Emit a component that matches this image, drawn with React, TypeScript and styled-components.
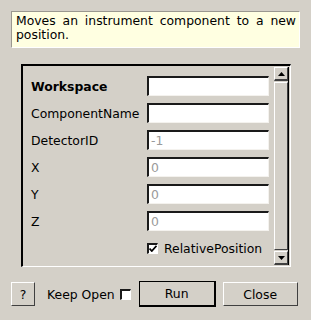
import { Fragment } from 'react'
import styled, { createGlobalStyle } from 'styled-components'

const GlobalStyle = createGlobalStyle`
  html, body {
    margin: 0;
    padding: 0;
    background: #d4d0c8;
  }
  body {
    font-family: "DejaVu Sans", "Liberation Sans", sans-serif;
    font-size: 12.4px;
    color: #000;
  }
`

const Dialog = styled.div`
  width: 311px;
  height: 320px;
  box-sizing: border-box;
  padding: 11px 11px 0 11px;
  display: flex;
  flex-direction: column;
`

const Description = styled.p`
  margin: 0;
  height: 37px;
  box-sizing: border-box;
  padding: 2px 3px 0 4px;
  background: #ffffe1;
  border-top: 1px solid #9a9890;
  border-left: 1px solid #9a9890;
  border-right: 1px solid #ffffff;
  border-bottom: 1px solid #ffffff;
  line-height: 14px;
  text-align: justify;
  width: 289px;
`

const Panel = styled.div`
  margin: 16px 0 0 10px;
  width: 270px;
  height: 203px;
  box-sizing: border-box;
  border-top: 2px solid #000;
  border-left: 2px solid #000;
  border-right: 1px solid #fff;
  border-bottom: 1px solid #fff;
  display: grid;
  grid-template-columns: 1fr 16px;
  column-gap: 4px;
`

const Form = styled.div`
  padding: 10px 0 0 8px;
  display: grid;
  grid-template-columns: 116px 122px;
  grid-auto-rows: 20px;
  row-gap: 7px;
  align-items: center;
`

const Label = styled.span<{ $bold?: boolean }>`
  font-weight: ${p => (p.$bold ? 'bold' : 'normal')};
`

const Input = styled.div`
  height: 20px;
  box-sizing: border-box;
  background: #fff;
  border-top: 2px solid #1a1a1a;
  border-left: 2px solid #1a1a1a;
  border-right: 1px solid #f4f2ee;
  border-bottom: 1px solid #f4f2ee;
  padding-left: 2px;
  color: #9a9a9a;
  line-height: 17px;
`

const CheckRow = styled.label`
  grid-column: 2;
  display: flex;
  align-items: center;
  gap: 6px;
`

const Box = styled.span`
  width: 11px;
  height: 11px;
  box-sizing: border-box;
  background: #fff;
  border-top: 2px solid #1a1a1a;
  border-left: 2px solid #1a1a1a;
  border-right: 1px solid #fff;
  border-bottom: 1px solid #fff;
  display: inline-flex;
  align-items: center;
  justify-content: center;
  flex: none;
`

const Scrollbar = styled.div`
  margin: 1px 1px 1px 0;
  display: flex;
  flex-direction: column;
  border-right: 1px solid #000;
`

const ArrowButton = styled.div`
  height: 14px;
  box-sizing: border-box;
  border-top: 1px solid #fff;
  border-left: 1px solid #fff;
  border-right: 1px solid #404040;
  border-bottom: 2px solid #404040;
  display: flex;
  align-items: center;
  justify-content: center;
`

const Thumb = styled.div`
  flex: 1;
  margin: 1px 0;
  border-top: 1px solid #fff;
  border-left: 1px solid #fff;
  border-right: 1px solid #404040;
  border-bottom: 1px solid #404040;
`

const Footer = styled.div`
  margin-top: 14px;
  display: flex;
  align-items: center;
  height: 26px;
`

const Button = styled.div<{ $w: number; $default?: boolean; $gap?: number }>`
  width: ${p => p.$w}px;
  height: ${p => (p.$default ? 26 : 24)}px;
  margin-left: ${p => p.$gap ?? 0}px;
  box-sizing: border-box;
  display: flex;
  align-items: center;
  justify-content: center;
  border-top: 1px solid #fff;
  border-left: 1px solid #fff;
  border-right: 1px solid #404040;
  border-bottom: 1px solid #404040;
  ${p => p.$default ? 'outline: 1px solid #000; outline-offset: -1px; border-right-width: 2px; border-bottom-width: 2px; border-right-color: #000; border-bottom-color: #000;' : ''}
`

const KeepOpen = styled.label`
  display: flex;
  align-items: center;
  gap: 5px;
  margin: 0 8px 0 12px;
`

const Tick = () => (
  <svg width="8" height="7" viewBox="0 0 8 7">
    <path d="M0.5 3.5 L2.8 6 L7.5 0.8" stroke="#000" strokeWidth="1.8" fill="none" />
  </svg>
)

const Arrow = ({ up }: { up?: boolean }) => (
  <svg width="7" height="4" viewBox="0 0 7 4">
    <path d={up ? 'M0 4 L3.5 0 L7 4 Z' : 'M0 0 L3.5 4 L7 0 Z'} fill="#000" />
  </svg>
)

const fields: { name: string; value: string; bold?: boolean }[] = [
  { name: 'Workspace', value: '', bold: true },
  { name: 'ComponentName', value: '' },
  { name: 'DetectorID', value: '-1' },
  { name: 'X', value: '0' },
  { name: 'Y', value: '0' },
  { name: 'Z', value: '0' }
]

const App = (): JSX.Element => (
  <Dialog>
    <GlobalStyle />
    <Description>Moves an instrument component to a new position.</Description>
    <Panel>
      <Form>
        {fields.map(f => (
          <Fragment key={f.name}>
            <Label $bold={f.bold}>{f.name}</Label>
            <Input>{f.value}</Input>
          </Fragment>
        ))}
        <CheckRow>
          <Box><Tick /></Box>
          RelativePosition
        </CheckRow>
      </Form>
      <Scrollbar>
        <ArrowButton><Arrow up /></ArrowButton>
        <Thumb />
        <ArrowButton><Arrow /></ArrowButton>
      </Scrollbar>
    </Panel>
    <Footer>
      <Button $w={24}>?</Button>
      <KeepOpen>Keep Open <Box /></KeepOpen>
      <Button $w={77} $default>Run</Button>
      <Button $w={75} $gap={7}>Close</Button>
    </Footer>
  </Dialog>
)

export default App
